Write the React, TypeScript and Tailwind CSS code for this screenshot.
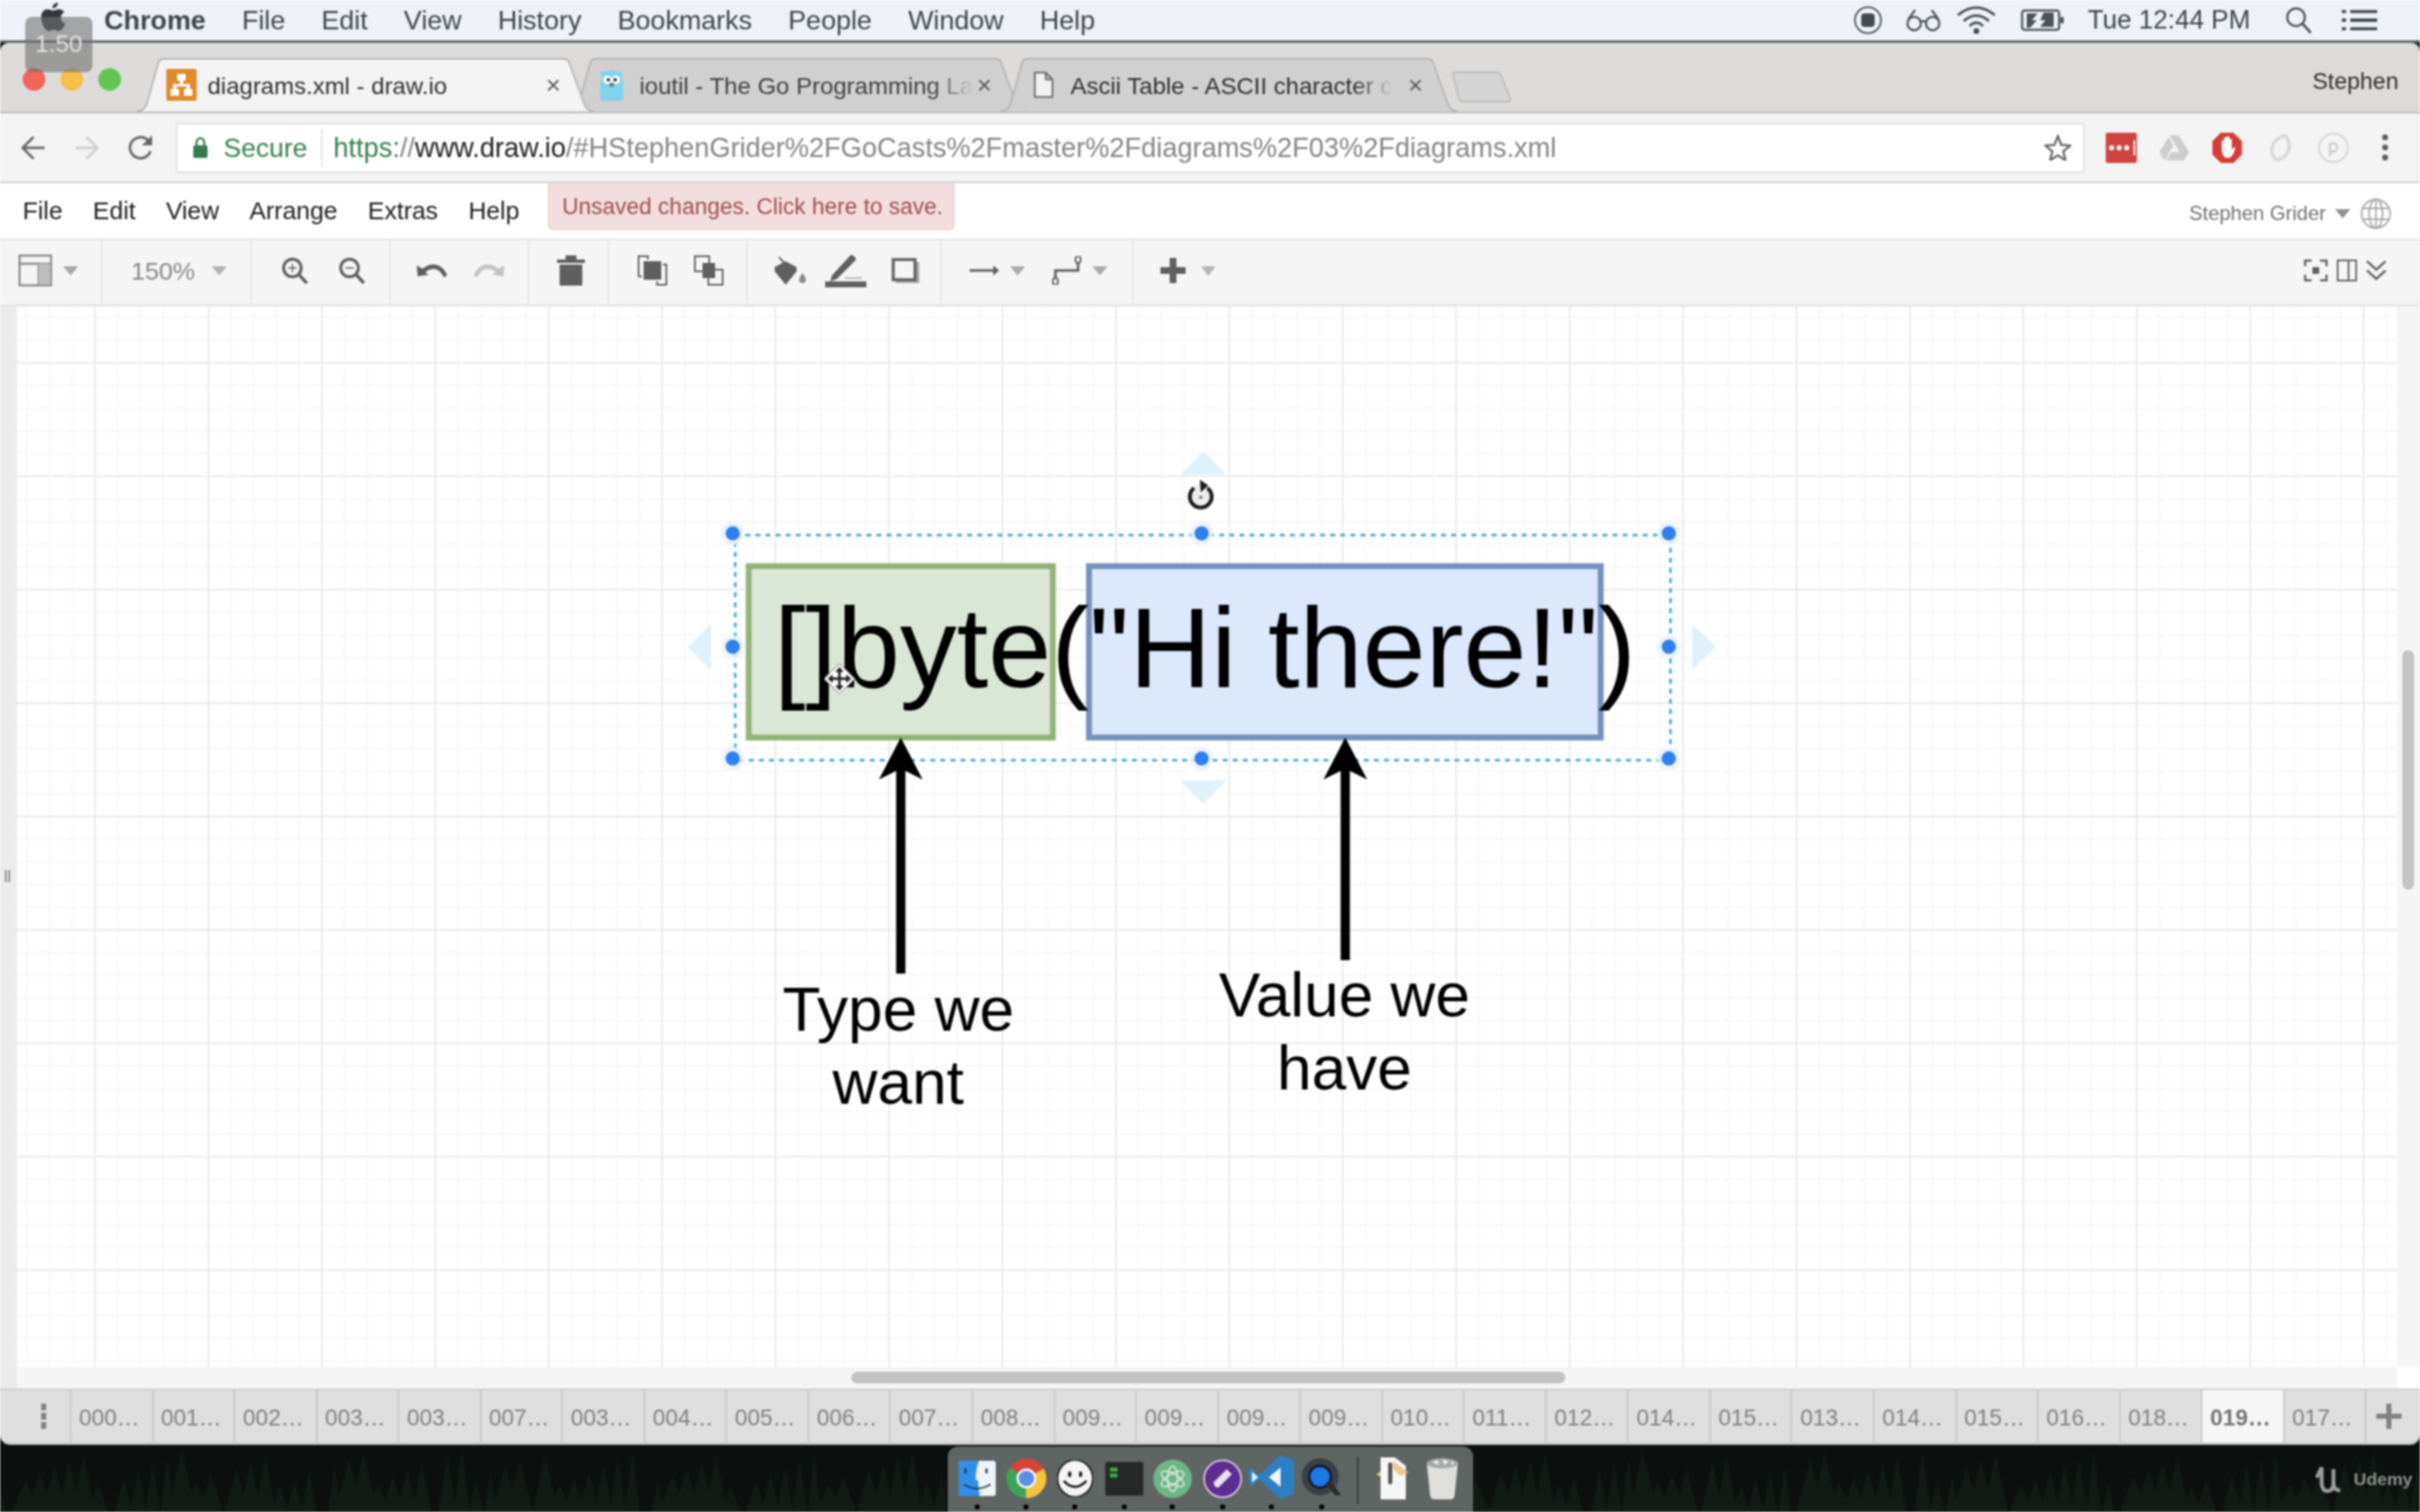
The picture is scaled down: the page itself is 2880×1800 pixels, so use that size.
import React from "react";

const G = "#5f5f5f";

function Caret({ c = "#a9a9a9", w = 18 }: { c?: string; w?: number }) {
  return (
    <svg width={w} height={12} viewBox="0 0 18 12" className="shrink-0">
      <path d="M0 1h18L9 12z" fill={c} />
    </svg>
  );
}

function Tab({
  w,
  active,
  pl,
  pr,
  ml,
  children,
}: {
  w: number;
  active?: boolean;
  pl: string;
  pr: string;
  ml?: string;
  children: React.ReactNode;
}) {
  return (
    <div className={`relative shrink-0 h-[64px] flex items-center ${pl} ${pr} ${ml ?? ""} ${active ? "z-10" : ""}`} style={{ width: w }}>
      <svg className="absolute inset-0 w-full h-full" viewBox="0 0 544 64" preserveAspectRatio="none">
        <path
          d="M0 63.5C7 63.5 10 60 12 54L25 7C26 3 28 1 32 1H508C512 1 514 3 515 7L532 54C534 60 537 63.5 544 63.5"
          fill={active ? "#f3f3f3" : "#d0d0d0"}
          stroke="#b4b4b4"
          strokeWidth="2"
        />
      </svg>
      <div className="relative flex items-center w-full">{children}</div>
    </div>
  );
}

function CloseX() {
  return (
    <svg width="15" height="15" viewBox="0 0 15 15" className="shrink-0 ml-auto">
      <path d="M1.5 1.5l12 12M13.5 1.5l-12 12" stroke="#555" strokeWidth="2" />
    </svg>
  );
}

function Handle({ x, y }: { x: number; y: number }) {
  return (
    <>
      <circle cx={x} cy={y} r="14" fill="#e8f1fb" fillOpacity="0.8" />
      <circle cx={x} cy={y} r="8.5" fill="#2f80ed" />
    </>
  );
}

function PageTab({ label, active }: { label: string; active?: boolean }) {
  return (
    <div
      className={`w-[97.55px] shrink-0 h-full flex items-center pl-[9px] pt-[5px] border-r-2 border-[#c8c8c8] text-[27px] ${
        active ? "bg-[#f6f6f6] font-bold text-[#757575]" : "bg-[#dedede] text-[#828282]"
      }`}
    >
      {label}
    </div>
  );
}

const pages = ["000", "001", "002", "003", "003", "007", "003", "004", "005", "006", "007", "008", "009", "009", "009", "009", "010", "011", "012", "014", "015", "013", "014", "015", "016", "018", "019", "017"];

function Dot() {
  return <span className="absolute left-1/2 -translate-x-1/2 top-[56px] w-[6px] h-[6px] rounded-full bg-black" />;
}

function DockItem({ w, mr, dot = true, children }: { w: number; mr: number; dot?: boolean; children: React.ReactNode }) {
  return (
    <div className="relative shrink-0 h-[50px] flex items-center justify-center" style={{ width: w, marginRight: mr }}>
      {children}
      {dot && <Dot />}
    </div>
  );
}

const trees = Array.from({ length: 150 }, (_, i) => {
  const x = i * 19.3 + ((i * 37) % 13);
  const h = 30 + ((i * 53) % 45);
  const w = 8 + ((i * 29) % 10);
  return `M${x} ${80 - h}l${w} ${h}h${-2 * w}z`;
}).join("");

export default function App() {
  return (
    <div className="relative w-[2880px] h-[1800px] overflow-hidden flex flex-col bg-[#0e1512] font-['Liberation_Sans',Arial,sans-serif] blur-[1px]">
      {/* macOS menu bar */}
      <div className="h-[51px] shrink-0 flex items-center bg-[#eef2f8] border-b-[3px] border-[#62676d] pl-[48px] pr-[51px] text-[32px] text-[#40454b]">
        <svg width="30" height="36" viewBox="0 0 30 36" className="shrink-0 -mt-[8px]">
          <path d="M21 1c.3 3-2.700 7-6.500 7C14 4.600 17.500 1.300 21 1zM22 9c-2.600 0-3.800 1.500-6.600 1.500C12.700 10.500 11 9 8.500 9 4 9 1 13 1 18.500 1 25.500 5.500 35 10 35c2.300 0 3.300-1.500 6-1.500s3.500 1.500 6 1.500c3.500 0 6.500-5.500 7.500-9-3-1.300-5-3.600-5-7 0-3 1.600-5.200 4-6.500C27 10 24.500 9 22 9z" fill="#33373b" />
        </svg>
        <span className="ml-[46px] font-bold">Chrome</span>
        <div className="flex gap-[43px] ml-[43px]">
          {["File", "Edit", "View", "History", "Bookmarks", "People", "Window", "Help"].map((m) => (
            <span key={m}>{m}</span>
          ))}
        </div>
        <div className="ml-auto flex items-center">
          <svg width="34" height="34" viewBox="0 0 34 34">
            <circle cx="17" cy="17" r="15.500" fill="none" stroke="#4d5257" strokeWidth="2" />
            <rect x="9" y="9" width="16" height="16" rx="4" fill="#44494e" />
          </svg>
          <svg width="42" height="28" viewBox="0 0 42 28" className="ml-[28px]">
            <g fill="none" stroke="#4d5257" strokeWidth="2.500">
              <circle cx="10" cy="18" r="8" />
              <circle cx="32" cy="18" r="8" />
              <path d="M18 16q3-2 6 0M3 13L11 2M39 13L31 2" />
            </g>
          </svg>
          <svg width="48" height="34" viewBox="0 0 48 34" className="ml-[18px]">
            <g fill="none" stroke="#4d5257" strokeWidth="3">
              <path d="M2 11Q24-7 46 11" />
              <path d="M9 18Q24 5 39 18" />
              <path d="M16 24Q24 16 32 24" />
            </g>
            <circle cx="24" cy="30" r="3.500" fill="#4d5257" />
          </svg>
          <svg width="51" height="26" viewBox="0 0 51 26" className="ml-[29px]">
            <rect x="1.500" y="1.500" width="44" height="23" rx="3" fill="none" stroke="#4d5257" strokeWidth="2.500" />
            <path d="M7 5h13l-7 8h6l-8 9H7zM27 4h12v17H23l6-8h-6z" fill="#4d5257" />
            <rect x="47" y="9" width="4" height="8" rx="2" fill="#4d5257" />
          </svg>
          <span className="ml-[28px] text-[31px]">Tue 12:44 PM</span>
          <svg width="32" height="32" viewBox="0 0 32 32" className="ml-[42px]">
            <circle cx="12.500" cy="12.500" r="10.500" fill="none" stroke="#4d5257" strokeWidth="2.500" />
            <path d="M20 20l10 11" stroke="#4d5257" strokeWidth="3" />
          </svg>
          <svg width="42" height="24" viewBox="0 0 42 24" className="ml-[35px]">
            <path d="M0 1.500h5M10 1.500h32M0 12h5M10 12h32M0 22.500h5M10 22.500h32" stroke="#44494e" strokeWidth="4" />
          </svg>
        </div>
      </div>

      {/* tab strip */}
      <div className="relative h-[84px] shrink-0 flex items-end bg-[#dcdbd9] rounded-t-[10px] border-b-2 border-[#bdbdbd] pl-[163px]">
        <Tab w={544} active pl="pl-[35px]" pr="pr-[41px]">
          <svg width="36" height="38" viewBox="0 0 36 38" className="shrink-0">
            <rect width="36" height="38" rx="2" fill="#e08a2c" />
            <path d="M13 6h10v8h-3v4h8v6h3v8h-10v-8h3v-3H12v3h3v8H5v-8h3v-6h8v-4h-3z" fill="#fff" />
          </svg>
          <span className="ml-[13px] mt-[2px] text-[28.500px] text-[#303030] whitespace-nowrap">diagrams.xml - draw.io</span>
          <CloseX />
        </Tab>
        <Tab w={544} ml="-ml-[30px]" pl="pl-[34px]" pr="pr-[42px]">
          <svg width="36" height="38" viewBox="0 0 36 38" className="shrink-0 -ml-[1px]">
            <path d="M5 6C5 3 8 2 10 4 15 1 21 1 26 4 28 2 31 3 31 6L30 9C32 18 32 28 31 38H5C4 28 4 18 6 9z" fill="#7fd3ee" />
            <circle cx="13" cy="13" r="5" fill="#fff" />
            <circle cx="23" cy="13" r="5" fill="#fff" />
            <circle cx="14" cy="13" r="2" fill="#222" />
            <circle cx="22" cy="13" r="2" fill="#222" />
            <ellipse cx="18" cy="19" rx="3" ry="2" fill="#8a6a4a" />
          </svg>
          <span className="ml-[15px] mt-[2px] whitespace-nowrap text-[28.500px] text-[#404040] [mask-image:linear-gradient(to_right,black_88%,transparent_100%)]">
            ioutil - The Go Programming La
          </span>
          <CloseX />
        </Tab>
        <Tab w={544} ml="-ml-[30px]" pl="pl-[39px]" pr="pr-[43px]">
          <svg width="24" height="32" viewBox="0 0 24 32" className="shrink-0">
            <path d="M1.500 1.500h13l8 8v21h-21zM14.500 1.500v8h8" fill="#f2f2f2" stroke="#666" strokeWidth="2" />
          </svg>
          <span className="ml-[20px] mt-[2px] whitespace-nowrap text-[28.500px] text-[#303030] [mask-image:linear-gradient(to_right,black_88%,transparent_100%)]">
            Ascii Table - ASCII character c
          </span>
          <CloseX />
        </Tab>
        <svg width="72" height="38" viewBox="0 0 72 38" className="shrink-0 -ml-[8px] mb-[10px]">
          <path d="M2 3C2 2 3 1 5 1H54C57 1 58 2 59 4L70 32C71 35 70 36 67 36H14C11 36 10 35 9 32z" fill="#d4d4d4" stroke="#bcbcbc" strokeWidth="2" />
        </svg>
        <span className="absolute left-[2752px] top-[25px] text-[27.500px] text-[#2e2e2e]">Stephen</span>
        <div className="absolute left-[27px] top-[30px] flex gap-[18px] z-20">
          <span className="block w-[27px] h-[27px] rounded-full bg-[#f2645c]" />
          <span className="block w-[27px] h-[27px] rounded-full bg-[#f9bd4b]" />
          <span className="block w-[27px] h-[27px] rounded-full bg-[#62c554]" />
        </div>
      </div>

      {/* address bar */}
      <div className="h-[83px] shrink-0 flex items-center bg-[#f3f3f3] border-b-2 border-[#d2d2d2] pl-[25px]">
        <svg width="29" height="30" viewBox="0 0 29 30" className="shrink-0">
          <path d="M28 15H3M15 2L2 15l13 13" fill="none" stroke="#666" strokeWidth="3" />
        </svg>
        <svg width="29" height="30" viewBox="0 0 29 30" className="shrink-0 ml-[35px]">
          <path d="M1 15h25M14 2l13 13-13 13" fill="none" stroke="#cfcfcf" strokeWidth="3" />
        </svg>
        <svg width="31" height="32" viewBox="0 0 31 32" className="shrink-0 ml-[34px]">
          <path d="M27 20A12.500 12.500 0 1 1 24 7" fill="none" stroke="#666" strokeWidth="3" />
          <path d="M29 1v12H17z" fill="#666" />
        </svg>
        <div className="w-[2272px] h-[60px] shrink-0 ml-[26px] flex items-center bg-white border-2 border-[#dfdfdf] rounded-[5px] pl-[19px]">
          <svg width="17" height="25" viewBox="0 0 17 25" className="shrink-0">
            <path d="M4 11V6a4.500 4.500 0 0 1 9 0v5" fill="none" stroke="#347c50" strokeWidth="2.500" />
            <rect y="10" width="17" height="15" rx="2" fill="#347c50" />
          </svg>
          <span className="ml-[19px] mt-[2px] text-[31.500px] text-[#34804f]">Secure</span>
          <span className="ml-[16px] w-[2px] h-[46px] bg-[#e6e6e6]" />
          <span className="ml-[13px] mt-[2px] text-[32.350px] whitespace-nowrap text-[#858585]">
            <span className="text-[#34804f]">https:</span>//<span className="text-[#202020]">www.draw.io</span>/#HStephenGrider%2FGoCasts%2Fmaster%2Fdiagrams%2F03%2Fdiagrams.xml
          </span>
          <svg width="32" height="31" viewBox="0 0 32 31" className="shrink-0 ml-auto mr-[14px]">
            <path d="M16 2l4 10.500 11 .8-8.500 7 2.800 10.700L16 25l-9.300 6 2.800-10.700-8.500-7 11-.8z" fill="none" stroke="#666" strokeWidth="2.500" />
          </svg>
        </div>
        <div className="ml-[25px] w-[37px] h-[36px] shrink-0 flex items-center bg-[#cf4440] rounded-[2px] pl-[4px] gap-[3px]">
          <span className="w-[6px] h-[6px] rounded-full bg-white" />
          <span className="w-[6px] h-[6px] rounded-full bg-white" />
          <span className="w-[6px] h-[6px] rounded-full bg-white" />
          <span className="w-[2px] h-[18px] bg-white ml-[2px]" />
        </div>
        <svg width="35" height="32" viewBox="0 0 35 32" className="ml-[27px] shrink-0">
          <path d="M12 1h11l12 20H24zM11 3l5.500 10L6 31 0 21zM8 31l6-10h21l-6 10z" fill="#cdcdcd" />
        </svg>
        <svg width="35" height="36" viewBox="0 0 35 36" className="ml-[28px] shrink-0">
          <path d="M10 0h15l10 10v16L25 36H10L0 26V10z" fill="#d53c35" />
          <path d="M11 18V10q2-2 3 0V6q2-2 3 0V5q2-2 3 0v3q2-2 3 0v12q4-5 4-1c-1 4-3 11-9 11-5 0-7-5-7-12z" fill="#fff" />
        </svg>
        <svg width="36" height="36" viewBox="0 0 36 36" className="ml-[28px] shrink-0">
          <g fill="none" stroke="#d8d8d8" strokeWidth="4">
            <path d="M14 33C3 25 6 8 24 3" />
            <path d="M24 3c8 11 5 25-10 30" />
          </g>
        </svg>
        <svg width="36" height="36" viewBox="0 0 36 36" className="ml-[27px] shrink-0">
          <circle cx="18" cy="18" r="17" fill="none" stroke="#d4d4d4" strokeWidth="2" />
          <path d="M14 28V12M14 14a5 5 0 1 1 0 7" fill="none" stroke="#cccccc" strokeWidth="2.500" />
        </svg>
        <div className="ml-[40px] flex flex-col gap-[5px] shrink-0">
          <span className="w-[7px] h-[7px] rounded-full bg-[#5f5f5f]" />
          <span className="w-[7px] h-[7px] rounded-full bg-[#5f5f5f]" />
          <span className="w-[7px] h-[7px] rounded-full bg-[#5f5f5f]" />
        </div>
      </div>

      {/* draw.io menu */}
      <div className="h-[68px] shrink-0 flex bg-white border-b-2 border-[#e6e6e6] pl-[27px]">
        <div className="flex gap-[36px] items-center text-[29.500px] text-[#1e1e1e] h-[66px]">
          {["File", "Edit", "View", "Arrange", "Extras", "Help"].map((m) => (
            <span key={m}>{m}</span>
          ))}
        </div>
        <div className="ml-[34px] w-[484px] h-[56px] flex items-center bg-[#f2dede] border-2 border-t-0 border-[#ecd3d5] rounded-b-[6px] pl-[15px] pt-[3px] text-[27px] text-[#9c4f4e] whitespace-nowrap">
          Unsaved changes. Click here to save.
        </div>
        <div className="ml-auto flex items-center h-[72px] pr-[34px] text-[24px] text-[#707070]">
          <span>Stephen Grider</span>
          <span className="ml-[11px]"><Caret c="#909090" /></span>
          <svg width="37" height="37" viewBox="0 0 37 37" className="ml-[12px]">
            <g fill="none" stroke="#a9a9a9" strokeWidth="2">
              <circle cx="18.500" cy="18.500" r="17" />
              <ellipse cx="18.500" cy="18.500" rx="8" ry="17" />
              <path d="M18.500 1v35M2 12h33M2 25h33" />
            </g>
          </svg>
        </div>
      </div>

      {/* toolbar */}
      <div className="h-[79px] shrink-0 flex bg-[#f5f5f5] border-b-[3px] border-[#e6e6e6] text-[30px] text-[#8a8a8a]">
        <div className="w-[122px] border-r-2 border-[#e6e6e6] flex items-center pl-[22px] pb-[4px] gap-[13px]">
          <svg width="40" height="38" viewBox="0 0 40 38" className="shrink-0">
            <g fill="none" stroke="#8a8a8a" strokeWidth="2.500">
              <rect x="1.250" y="1.250" width="37.500" height="35.500" />
              <path d="M1 11h38M24 11v26" />
            </g>
            <rect x="24" y="11" width="14" height="25" fill="#bdbdbd" />
          </svg>
          <Caret />
        </div>
        <div className="w-[178px] border-r-2 border-[#e6e6e6] flex items-center pl-[34px] pb-[4px] gap-[19px]">
          <span className="w-[77px] tracking-[-0.200px]">150%</span>
          <Caret c="#b3b3b3" />
        </div>
        <div className="w-[165px] border-r-2 border-[#e6e6e6] flex items-center pl-[35px] pb-[4px] gap-[36px]">
          <svg width="32" height="32" viewBox="0 0 32 32" className="shrink-0">
            <circle cx="13" cy="13" r="10.500" fill="none" stroke={G} strokeWidth="3.500" />
            <path d="M20 20l10 11" stroke={G} strokeWidth="4" />
            <path d="M13 8v10M8 13h10" stroke={G} strokeWidth="1.500" />
          </svg>
          <svg width="32" height="32" viewBox="0 0 32 32" className="shrink-0">
            <circle cx="13" cy="13" r="10.500" fill="none" stroke={G} strokeWidth="3.500" />
            <path d="M20 20l10 11" stroke={G} strokeWidth="4" />
            <path d="M8 13h10" stroke={G} strokeWidth="1.500" />
          </svg>
        </div>
        <div className="w-[165px] border-r-2 border-[#e6e6e6] flex items-center pl-[31px] pb-[4px] gap-[32px]">
          <svg width="36" height="17" viewBox="0 0 36 17" className="shrink-0">
            <path d="M0 2l1 13 13-2-4-3c8-6 17-5 22 6 3-1 4-2 4-3C30 0 17-3 7 6z" fill={G} />
          </svg>
          <svg width="36" height="17" viewBox="0 0 36 17" className="shrink-0">
            <path d="M36 2l-1 13-13-2 4-3c-8-6-17-5-22 6-3-1-4-2-4-3C6 0 19-3 29 6z" fill="#c2c2c2" />
          </svg>
        </div>
        <div className="w-[95px] border-r-2 border-[#e6e6e6] flex items-center pl-[33px] pb-[4px]">
          <svg width="33" height="36" viewBox="0 0 33 36">
            <path d="M0 5h10V1q0-1 1-1h11q1 0 1 1v4h10v4H0zM3 11h27v25H3z" fill={G} />
          </svg>
        </div>
        <div className="w-[165px] border-r-2 border-[#e6e6e6] flex items-center pl-[34px] pb-[4px] gap-[32px]">
          <svg width="35" height="36" viewBox="0 0 35 36" className="shrink-0">
            <path d="M12 5V1H1v24h4M23 31v4h11V11h-4" fill="none" stroke={G} strokeWidth="2" />
            <rect x="7" y="7" width="21" height="22" fill={G} />
          </svg>
          <svg width="35" height="36" viewBox="0 0 35 36" className="shrink-0">
            <rect x="1" y="1" width="17" height="18" fill="#f5f5f5" stroke={G} strokeWidth="2" />
            <rect x="17" y="17" width="17" height="18" fill="#f5f5f5" stroke={G} strokeWidth="2" />
            <rect x="10" y="9" width="15" height="18" fill={G} />
          </svg>
        </div>
        <div className="w-[231px] border-r-2 border-[#e6e6e6] flex items-center pl-[31px] pb-[4px]">
          <svg width="39" height="34" viewBox="0 0 39 34" className="shrink-0">
            <path d="M6 1l16 18" stroke={G} strokeWidth="2" />
            <path d="M1 13l13-7 13 7v5L14 34 1 18z" fill={G} />
            <path d="M34 20c3 4 4 6 4 8a4 4 0 0 1-8 0c0-2 1-4 4-8z" fill="#8a8a8a" />
          </svg>
          <svg width="49" height="40" viewBox="0 0 49 40" className="shrink-0 ml-[22px]">
            <path d="M8 26L30 2c2-2 8 3 6 6L14 30l-8 3z" fill={G} />
            <rect y="33" width="49" height="7" fill={G} />
            <path d="M24 29h20" stroke="#b5b5b5" strokeWidth="2" />
          </svg>
          <svg width="33" height="30" viewBox="0 0 33 30" className="shrink-0 ml-[30px]">
            <rect x="5" y="5" width="28" height="25" fill="#a8a8a8" />
            <rect x="2" y="2" width="26" height="24" fill="#f5f5f5" stroke={G} strokeWidth="3.500" />
          </svg>
        </div>
        <div className="w-[228px] border-r-2 border-[#e6e6e6] flex items-center pl-[33px] pb-[4px]">
          <svg width="35" height="12" viewBox="0 0 35 12" className="shrink-0">
            <path d="M0 6h28" stroke={G} strokeWidth="3" />
            <path d="M28 0l7 6-7 6z" fill={G} />
          </svg>
          <span className="ml-[13px]"><Caret /></span>
          <svg width="35" height="34" viewBox="0 0 35 34" className="shrink-0 ml-[32px]">
            <path d="M4 28V17h27V5" fill="none" stroke={G} strokeWidth="3" />
            <rect x="28" y="0" width="6" height="8" rx="3" fill="#f5f5f5" stroke={G} strokeWidth="2" />
            <rect x="1" y="26" width="6" height="8" rx="3" fill="#f5f5f5" stroke={G} strokeWidth="2" />
          </svg>
          <span className="ml-[13px]"><Caret /></span>
        </div>
        <div className="flex items-center pl-[32px] pb-[4px]">
          <svg width="30" height="30" viewBox="0 0 30 30" className="shrink-0">
            <path d="M11 0h8v11h11v8H19v11h-8V19H0v-8h11z" fill={G} />
          </svg>
          <span className="ml-[18px]"><Caret c="#b3b3b3" /></span>
        </div>
        <div className="ml-auto flex items-center pr-[40px] pb-[4px] gap-[11px]">
          <svg width="28" height="26" viewBox="0 0 28 26" className="shrink-0">
            <path d="M1 8V1h8M19 1h8v7M27 18v7h-8M9 25H1v-7" fill="none" stroke={G} strokeWidth="3" />
            <rect x="10" y="9" width="8" height="8" fill={G} />
          </svg>
          <svg width="24" height="26" viewBox="0 0 24 26" className="shrink-0">
            <rect x="1" y="1" width="22" height="24" fill="none" stroke={G} strokeWidth="2" />
            <path d="M14 1v24" stroke={G} strokeWidth="2" />
          </svg>
          <svg width="24" height="24" viewBox="0 0 24 24" className="shrink-0">
            <path d="M1 1l11 10L23 1M1 12l11 10 11-10" fill="none" stroke={G} strokeWidth="2.500" />
          </svg>
        </div>
      </div>

      {/* canvas area */}
      <div className="h-[1262px] shrink-0 flex bg-white">
        <div className="w-[20px] shrink-0 bg-[#ebebeb] flex items-center justify-start pl-[6px]">
          <div className="flex gap-[2px] mt-[94px]">
            <span className="w-[2px] h-[14px] bg-[#8a8a8a]" />
            <span className="w-[2px] h-[14px] bg-[#8a8a8a]" />
          </div>
        </div>
        <div className="relative flex-1 bg-white [background-image:linear-gradient(#ebebeb_2px,transparent_2px),linear-gradient(90deg,#ebebeb_2px,transparent_2px),linear-gradient(#f8f8f8_2px,transparent_2px),linear-gradient(90deg,#f8f8f8_2px,transparent_2px)] [background-size:135px_135px,135px_135px,27px_27px,27px_27px] [background-position:0_66px,92px_0,0_12px,11px_0]">
          {/* origin of the canvas: x = 20, y = 365 */}
          <svg className="absolute left-0 top-0" width="2833" height="1262" viewBox="20 365 2833 1262">
            <path d="M1432 537l27 28h-54z" fill="#dff1fb" />
            <path d="M1432 957l27-28h-54z" fill="#dff1fb" />
            <path d="M818 770l28-27v54z" fill="#dff1fb" />
            <path d="M2042 770l-28-27v54z" fill="#dff1fb" />
            <rect x="875" y="637" width="1113" height="268" fill="none" stroke="#3fa9e0" strokeWidth="3" strokeDasharray="6 6" />
            <rect x="891" y="674" width="362" height="204" fill="#dae7d6" stroke="#92b378" strokeWidth="7" />
            <rect x="1296" y="674" width="609" height="204" fill="#dce8fb" stroke="#7490bd" strokeWidth="7" />
            <Handle x={872} y={635} />
            <Handle x={1430} y={635} />
            <Handle x={1986} y={635} />
            <Handle x={872} y={770} />
            <Handle x={1986} y={770} />
            <Handle x={872} y={903} />
            <Handle x={1430} y={903} />
            <Handle x={1986} y={903} />
            <path d="M1072 1159V900" stroke="#000" strokeWidth="11" />
            <path d="M1072 878l-26 50 26-13 26 13z" fill="#000" />
            <path d="M1601 1143V900" stroke="#000" strokeWidth="11" />
            <path d="M1601 878l-26 50 26-13 26 13z" fill="#000" />
            <circle cx="1429" cy="592" r="16" fill="#dddddd" fillOpacity="0.5" />
            <path d="M1437 581A13 13 0 1 1 1421 581" fill="none" stroke="#1c1c1c" strokeWidth="4.500" />
            <path d="M1428 571l1 15 9-8z" fill="#1c1c1c" />
            <circle cx="1429" cy="592" r="2" fill="#777" />
          </svg>
          <div className="absolute left-[908px] top-[327px] w-[1012px] flex justify-center text-[135px] leading-[160px] text-black whitespace-nowrap">
            []byte("Hi there!")
          </div>
          <div className="absolute left-[849px] top-[793px] w-[400px] text-center text-[74px] leading-[87px] text-black">
            Type we
            <br />
            want
          </div>
          <div className="absolute left-[1380px] top-[776px] w-[400px] text-center text-[74px] leading-[87px] text-black">
            Value we
            <br />
            have
          </div>
          <svg className="absolute left-[961px] top-[425px]" width="36" height="36" viewBox="0 0 36 36">
            <path d="M18 0l18 18-18 18L0 18z" fill="#fff" stroke="#aaa" strokeWidth="1.500" />
            <path d="M18 6v24M6 18h24" stroke="#222" strokeWidth="3" />
            <path d="M18 4l5 6H13zM18 32l5-6H13zM4 18l6-5v10zM32 18l-6-5v10z" fill="#222" />
          </svg>
        </div>
        <div className="w-[27px] shrink-0 bg-[#f5f5f5] flex flex-col pt-[409px] pl-[6px]">
          <div className="w-[14px] h-[285px] rounded-full bg-[#c4c4c4]" />
        </div>
      </div>

      {/* horizontal scrollbar */}
      <div className="h-[26px] shrink-0 flex">
        <div className="w-[20px] bg-[#ebebeb]" />
        <div className="w-[2833px] bg-[#f5f5f5] pl-[993px] pt-[6px]">
          <div className="w-[850px] h-[14px] rounded-full bg-[#c4c4c4]" />
        </div>
        <div className="w-[27px] bg-white" />
      </div>

      {/* page tabs */}
      <div className="h-[67px] shrink-0 flex bg-[#dedede] border-t-2 border-b-[3px] border-[#cfcfcf] rounded-b-[12px] pl-[20px]">
        <div className="w-[65px] shrink-0 h-full flex flex-col items-center justify-center gap-[3px] border-r-2 border-[#c8c8c8] bg-[#dedede]">
          <span className="w-[6px] h-[8px] bg-[#808080]" />
          <span className="w-[6px] h-[8px] bg-[#808080]" />
          <span className="w-[6px] h-[8px] bg-[#808080]" />
        </div>
        {pages.map((p, i) => (
          <PageTab key={i} label={`${p}…`} active={i === 26} />
        ))}
        <div className="flex-1 flex items-center justify-center pr-[10px]">
          <svg width="30" height="30" viewBox="0 0 30 30">
            <path d="M12 0h6v12h12v6H18v12h-6V18H0v-6h12z" fill="#808080" />
          </svg>
        </div>
      </div>

      {/* desktop + dock */}
      <div className="relative flex-1 flex justify-center bg-[#0c110f]">
        <svg className="absolute inset-0" width="2880" height="80" viewBox="0 0 2880 80">
          <path d={trees} fill="#121a15" />
        </svg>
        <div className="relative w-[625px] h-[78px] mt-[2px] flex items-start pt-[13px] pl-[13px] bg-[#5f6563] rounded-t-[12px]">
          <DockItem w={44} mr={12}>
            <svg width="44" height="42" viewBox="0 0 44 42">
              <rect width="44" height="42" rx="3" fill="#eef4fa" />
              <path d="M3 0h21c-3 8-4 16-4 23h3c0 6 1 13 2 19H3a3 3 0 0 1-3-3V3a3 3 0 0 1 3-3z" fill="#2f8fe8" />
              <path d="M8 9v6M33 9v6" stroke="#24364e" strokeWidth="2.500" />
              <path d="M6 28q16 10 32 0" fill="none" stroke="#24364e" strokeWidth="2" />
            </svg>
          </DockItem>
          <DockItem w={49} mr={12}>
            <svg width="49" height="50" viewBox="0 0 50 50">
              <path d="M25 25L5 12A24 24 0 0 1 46 13z" fill="#d8433a" />
              <path d="M25 25L46 13A24 24 0 0 1 24 49z" fill="#f3c33e" />
              <path d="M25 25L24 49A24 24 0 0 1 5 12z" fill="#3ea556" />
              <circle cx="25" cy="25" r="12" fill="#fff" />
              <circle cx="25" cy="25" r="9.500" fill="#5d8fe0" />
            </svg>
          </DockItem>
          <DockItem w={43} mr={14}>
            <svg width="43" height="44" viewBox="0 0 43 44">
              <ellipse cx="21.500" cy="22" rx="21" ry="22" fill="#f5f5f5" stroke="#222" strokeWidth="2" />
              <ellipse cx="15" cy="17" rx="2" ry="3.500" fill="#222" />
              <ellipse cx="28" cy="17" rx="2" ry="3.500" fill="#222" />
              <path d="M8 25q13 14 27 0" fill="none" stroke="#222" strokeWidth="3" />
            </svg>
          </DockItem>
          <DockItem w={46} mr={11}>
            <svg width="46" height="41" viewBox="0 0 46 41">
              <rect width="46" height="41" rx="2" fill="#262827" stroke="#555" />
              <path d="M6 7h9v5H6zM6 14h9v5H6z" fill="#3ea344" />
            </svg>
          </DockItem>
          <DockItem w={47} mr={13}>
            <svg width="47" height="47" viewBox="0 0 47 47">
              <circle cx="23.500" cy="23.500" r="23" fill="#6fb586" />
              <g fill="none" stroke="#e3f1e7" strokeWidth="1.500">
                <ellipse cx="23.500" cy="23.500" rx="15" ry="6" transform="rotate(30 23.500 23.500)" />
                <ellipse cx="23.500" cy="23.500" rx="15" ry="6" transform="rotate(90 23.500 23.500)" />
                <ellipse cx="23.500" cy="23.500" rx="15" ry="6" transform="rotate(150 23.500 23.500)" />
              </g>
            </svg>
          </DockItem>
          <DockItem w={46} mr={8}>
            <svg width="46" height="47" viewBox="0 0 46 47">
              <circle cx="23" cy="23.500" r="22" fill="#5d2d91" stroke="#d9c9e8" strokeWidth="2" />
              <path d="M14 33l-2-5L28 12l6 6-16 16z" fill="#e9e0f2" />
            </svg>
          </DockItem>
          <DockItem w={54} mr={9}>
            <svg width="54" height="53" viewBox="0 0 54 53" className="-mt-[4px]">
              <path d="M38 0l16 7v39l-16 7L13 29 4 37 0 34V19l4-3 9 8z" fill="#2c7fc4" />
              <path d="M38 15L24 26.500 38 38z" fill="#f4f8fc" />
              <path d="M4 20v13l7-6.500z" fill="#f4f8fc" />
            </svg>
          </DockItem>
          <DockItem w={48} mr={18}>
            <svg width="48" height="48" viewBox="0 0 48 48">
              <circle cx="22" cy="22" r="22" fill="#3c4044" />
              <circle cx="22" cy="22" r="13" fill="#1c79e8" stroke="#0c1b30" strokeWidth="3" />
              <path d="M28 30l12 14h7L34 26z" fill="#2a2d30" />
            </svg>
          </DockItem>
          <span className="w-[2px] h-[56px] bg-[#3a3d3c] shrink-0 mr-[21px]" />
          <DockItem w={40} mr={19} dot={false}>
            <svg width="40" height="50" viewBox="0 0 40 50">
              <path d="M5 0h17l13 10v40H5z" fill="#f7f7f7" />
              <path d="M20 4l18 14-9 4-9-8z" fill="#ecc98d" />
              <path d="M0 20l5-3v6z" fill="#ecc98d" />
              <rect x="14" y="6" width="5" height="26" rx="2" fill="#555" />
            </svg>
          </DockItem>
          <DockItem w={39} mr={0} dot={false}>
            <svg width="39" height="50" viewBox="0 0 39 50">
              <path d="M1 7h37l-4 39q-1 4-5 4H10q-4 0-5-4z" fill="#dededb" />
              <ellipse cx="19.500" cy="7" rx="18.500" ry="6" fill="#a4a9a7" />
              <path d="M8 6l5-3 3 6zM20 2l7 3-5 4zM29 7l4-2v4z" fill="#f2f2f2" />
            </svg>
          </DockItem>
        </div>
        <div className="absolute left-[2755px] top-[24px] flex items-center gap-[8px]">
          <svg width="38" height="34" viewBox="0 0 38 34">
            <path d="M2 15L8 3V20Q8 31 15 31T22 20V5M22 20Q22 31 30 30" fill="none" stroke="#9a9d9b" strokeWidth="4.500" />
          </svg>
          <span className="text-[21px] font-bold text-[#8d908e]">Udemy</span>
        </div>
      </div>

      {/* video player speed badge */}
      <div className="absolute left-[30px] top-[20px] w-[80px] h-[66px] rounded-[8px] bg-[#707070]/60 flex items-center justify-center z-30 text-[29px] text-[#dedede]">
        1.50
      </div>
    </div>
  );
}
